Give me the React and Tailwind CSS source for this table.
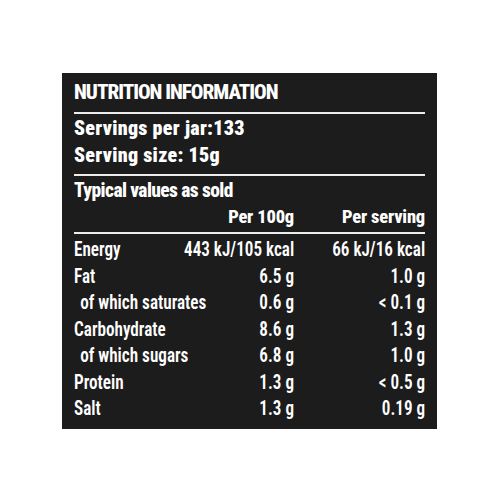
const rows = [
  { label: "Energy", per100: "443 kJ/105 kcal", perServing: "66 kJ/16 kcal" },
  { label: "Fat", per100: "6.5 g", perServing: "1.0 g" },
  { label: "of which saturates", per100: "0.6 g", perServing: "< 0.1 g", sub: true },
  { label: "Carbohydrate", per100: "8.6 g", perServing: "1.3 g" },
  { label: "of which sugars", per100: "6.8 g", perServing: "1.0 g", sub: true },
  { label: "Protein", per100: "1.3 g", perServing: "< 0.5 g" },
  { label: "Salt", per100: "1.3 g", perServing: "0.19 g" },
];

export default function App() {
  return (
    <div className="w-[500px] h-[500px] bg-white flex items-center justify-center">
      <div className="w-[375px] h-[356px] bg-[#1c1c1c] px-[12px] pt-[4px] text-white font-['Roboto_Condensed','Open_Sans_Condensed',sans-serif] ml-[-1px] mt-[2px] overflow-hidden">
        <div className="h-[37px] border-b-2 border-[#ececec] text-[21px] leading-[30px] font-extrabold tracking-[-1px]">
          NUTRITION INFORMATION
        </div>
        <div className="pt-[1px] h-[62px] border-b-2 border-[#ececec] text-[20px] font-black tracking-[0.3px]">
          <div className="h-[27px] leading-[27px]">Servings per jar:133</div>
          <div className="h-[27px] leading-[27px]">Serving size: 15g</div>
        </div>
        <div className="pt-[1px] h-[58px] border-b-2 border-[#ececec] text-[19.5px] font-extrabold">
          <div className="h-[27px] leading-[27px] tracking-[-0.6px]">Typical values as sold</div>
          <div className="flex h-[26px] leading-[26px] text-[18.5px] tracking-[-0.2px]">
            <div className="flex-1" />
            <div className="w-[110px] text-right">Per 100g</div>
            <div className="w-[131px] text-right">Per serving</div>
          </div>
        </div>
        <div className="pt-[3px] w-[399px] scale-x-[0.88] origin-left text-[19.5px] font-semibold">
          {rows.map((r) => (
            <div key={r.label} className="flex h-[26.5px] leading-[26.5px]">
              <div className={r.sub ? "flex-1 min-w-0 pl-[7px] whitespace-nowrap" : "flex-1 min-w-0 whitespace-nowrap"}>{r.label}</div>
              <div className="w-[125px] text-right whitespace-nowrap">{r.per100}</div>
              <div className="w-[149px] text-right whitespace-nowrap">{r.perServing}</div>
            </div>
          ))}
        </div>
      </div>
    </div>
  );
}
